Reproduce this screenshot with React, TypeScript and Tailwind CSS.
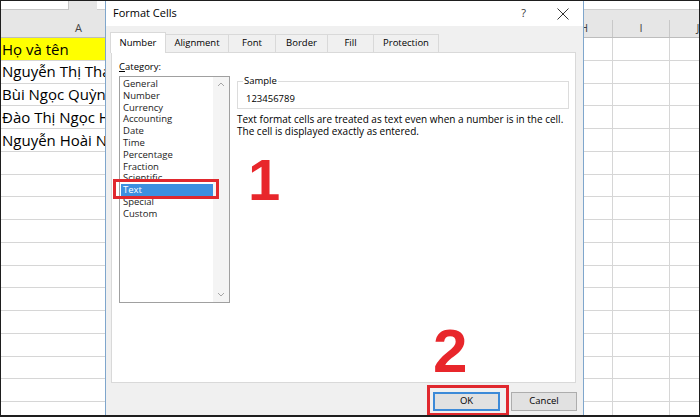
import React from "react";

const COLS = [
  { w: 156, label: "A" },
  { w: 66.5, label: "B" },
  { w: 66.5, label: "C" },
  { w: 66.5, label: "D" },
  { w: 66.5, label: "E" },
  { w: 66.5, label: "F" },
  { w: 66.5, label: "G" },
  { w: 57, label: "H" },
  { w: 57, label: "I" },
  { w: 57, label: "J" },
];

const NAMES = [
  "Họ và tên",
  "Nguyễn Thị Thảo",
  "Bùi Ngọc Quỳnh",
  "Đào Thị Ngọc Hà",
  "Nguyễn Hoài Nam",
];

const CATEGORIES = [
  "General",
  "Number",
  "Currency",
  "Accounting",
  "Date",
  "Time",
  "Percentage",
  "Fraction",
  "Scientific",
  "Text",
  "Special",
  "Custom",
];

const TABS = [
  { name: "Number", w: "w-[56px]" },
  { name: "Alignment", w: "w-[63px]" },
  { name: "Font", w: "w-[47px]" },
  { name: "Border", w: "w-[52px]" },
  { name: "Fill", w: "w-[46px]" },
  { name: "Protection", w: "w-[65px]" },
];

const Sheet = () => {
  const rows = Array.from({ length: 17 }, (_, i) => i);
  return (
    <div className="flex flex-col font-['Open_Sans',sans-serif]">
      {/* bottom of the formula bar */}
      <div className="flex h-[9px]">
        <div className="w-[68px] bg-white border-r border-b border-[#c6c6c6]" />
        <div className="w-[28px] bg-[#e6e6e6]" />
        <div className="flex-1 bg-white border-b border-[#d0d0d0]" />
      </div>
      {/* column headers */}
      <div className="flex h-[28px] items-end bg-[#e6e6e6] border-b border-[#bdbdbd]">
        {COLS.map((c) => (
          <div
            key={c.label}
            style={{ width: c.w }}
            className="shrink-0 h-[17px] border-r border-[#c8c8c8] flex items-center justify-center text-[11px] text-[#444]"
          >
            {c.label}
          </div>
        ))}
      </div>
      {rows.map((r) => (
        <div key={r} className="flex h-[22.75px]">
          {COLS.map((c, ci) => (
            <div
              key={c.label}
              style={{ width: c.w }}
              className={
                ci === 0
                  ? r === 0
                    ? "shrink-0 bg-[#ffff00] border-b border-[#d6d6d6] flex items-center pl-px text-[15px] text-black whitespace-nowrap overflow-visible"
                    : "shrink-0 border-b border-[#d6d6d6] flex items-center pl-px text-[15px] text-black whitespace-nowrap overflow-visible"
                  : "shrink-0 border-r border-b border-[#d6d6d6]"
              }
            >
              {ci === 0 ? NAMES[r] ?? "" : null}
            </div>
          ))}
        </div>
      ))}
    </div>
  );
};

const CategoryList = () => (
  <div className="flex flex-col">
    <div className="text-[9.5px] leading-[12px] text-black mb-[3px]">
      <span className="underline">C</span>ategory:
    </div>
    <div className="w-[111px] h-[227px] border border-[#a0a0a0] bg-white flex">
      <div className="flex-1 pt-px pl-px flex flex-col">
        {CATEGORIES.map((c) => (
          <div
            key={c}
            className={
              c === "Text"
                ? "relative h-[11.8px] leading-[11.8px] pl-[2px] text-[9.5px] bg-[#3d8fe0] text-white"
                : "h-[11.8px] leading-[11.8px] pl-[2px] text-[9.5px] text-[#222]"
            }
          >
            {c}
            {c === "Text" && (
              <span className="absolute -left-[8px] -right-[6px] -top-[5px] -bottom-[3px] border-[3px] border-[#e0282e]" />
            )}
          </div>
        ))}
      </div>
      <div className="w-[16px] bg-[#f4f4f4] flex flex-col items-center justify-between py-[5px]">
        <svg width="8" height="5" viewBox="0 0 8 5">
          <path d="M1 4 L4 1 L7 4" fill="none" stroke="#a6a6a6" strokeWidth="1" />
        </svg>
        <svg width="8" height="5" viewBox="0 0 8 5">
          <path d="M1 1 L4 4 L7 1" fill="none" stroke="#a6a6a6" strokeWidth="1" />
        </svg>
      </div>
    </div>
  </div>
);

const FormatCellsDialog = () => (
  <div className="absolute left-[104px] top-0 bottom-0 w-[479px] border-x border-[#7fa6cc] flex flex-col font-['Open_Sans',sans-serif]">
    {/* title bar */}
    <div className="h-[25px] bg-white flex items-center pl-[7px] pr-[14px]">
      <span className="text-[11px] text-black">Format Cells</span>
      <span className="ml-auto text-[11px] text-[#333]">?</span>
      <svg className="ml-[31px]" width="12" height="12" viewBox="0 0 12 12">
        <path d="M0.5 0.5 L11.5 11.5 M11.5 0.5 L0.5 11.5" stroke="#333" strokeWidth="1" />
      </svg>
    </div>

    <div className="flex-1 bg-[#f0f0f0] flex flex-col pt-[6px] pl-[5px] pr-[7px]">
      {/* tabs */}
      <div className="flex items-end h-[20px] -ml-px">
        {TABS.map((t, i) => (
          <div
            key={t.name}
            className={
              i === 0
                ? `${t.w} relative z-10 h-[21px] -mb-px bg-white border border-b-0 border-[#d9d9d9] flex items-center justify-center text-[9.5px] text-black`
                : `${t.w} h-[18px] bg-[#f0f0f0] border-t border-r border-[#d9d9d9] flex items-center justify-center text-[9.5px] text-black`
            }
          >
            {t.name}
          </div>
        ))}
      </div>

      {/* tab panel */}
      <div className="h-[331px] bg-white border border-[#d9d9d9] flex pt-[8px] pl-[7px]">
        <CategoryList />
        <div className="ml-[7px] mt-[14px] w-[332px] flex flex-col">
          <fieldset className="border border-[#dcdcdc] pl-[5px] pb-[3px]">
            <legend className="px-px text-[9.5px] leading-[12px] text-black">Sample</legend>
            <div className="ml-[3px] mt-[6px] text-[9.5px] leading-[12px] text-black">123456789</div>
          </fieldset>
          <p className="mt-[4px] text-[10px] leading-[12px] text-black">
            Text format cells are treated as text even when a number is in the cell.
            <br />
            The cell is displayed exactly as entered.
          </p>
          <div className="mt-[14px] ml-[11px] text-[58px] leading-none font-bold text-[#e8262b] font-['Liberation_Sans',sans-serif]">
            1
          </div>
          <div className="mt-auto ml-[196px] text-[62px] leading-none font-bold text-[#e8262b] font-['Liberation_Sans',sans-serif]">
            2
          </div>
        </div>
      </div>

      {/* buttons */}
      <div className="mt-[9px] flex justify-end gap-[11px] -mr-px">
        <button className="relative w-[67px] h-[19px] bg-[#e1e1e1] border-2 border-[#3c8ad8] text-[9.5px] text-black flex items-center justify-center">
          OK
          <span className="absolute -left-[8px] -right-[11px] -top-[9px] -bottom-[7px] border-[3px] border-[#e0282e]" />
        </button>
        <button className="w-[66px] h-[19px] bg-[#e1e1e1] border border-[#adadad] text-[9.5px] text-black flex items-center justify-center">
          Cancel
        </button>
      </div>
    </div>
  </div>
);

export default function App() {
  return (
    <div className="relative w-[700px] h-[417px] overflow-hidden bg-white border border-b-2 border-[#1e1e1e]">
      <Sheet />
      <FormatCellsDialog />
    </div>
  );
}
